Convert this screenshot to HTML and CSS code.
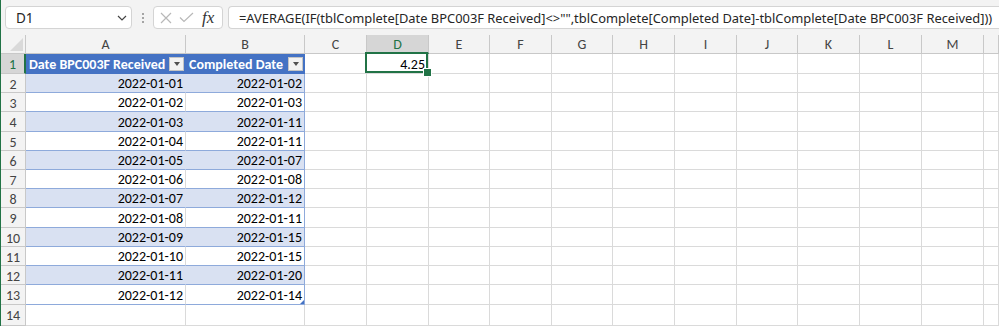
FILE: index.html
```html
<!DOCTYPE html>
<html lang="en">
<head>
    <meta charset="UTF-8">
    <title>tblComplete - Excel</title>
    <link rel="stylesheet" href="styles.css">
</head>
<body>
    <div class="window">
        <div class="formula-bar">
            <div class="name-box">
                <span>D1</span>
                <svg class="chevron" width="10" height="6" viewBox="0 0 10 6"><polyline points="1,1 5,5 9,1" fill="none" stroke="#444" stroke-width="1.2"/></svg>
            </div>
            <div class="grip"><i></i><i></i><i></i></div>
            <div class="fx-box">
                <svg width="12" height="12" viewBox="0 0 12 12"><path d="M1 1 L11 11 M11 1 L1 11" stroke="#b8b8b8" stroke-width="1.2"/></svg>
                <svg width="15" height="11" viewBox="0 0 15 11"><polyline points="1,5.5 5,9.5 14,1" fill="none" stroke="#b8b8b8" stroke-width="1.2"/></svg>
                <span class="fx">fx</span>
            </div>
            <div class="formula">=AVERAGE(IF(tblComplete[Date BPC003F Received]&lt;&gt;"",tblComplete[Completed Date]-tblComplete[Date BPC003F Received]))</div>
        </div>

        <div class="sheet">
            <div class="corner"><svg width="13" height="13" viewBox="0 0 13 13"><polygon points="13,0 13,13 0,13" fill="#d9d9d9"/></svg></div>
            <div class="ch">A</div><div class="ch">B</div><div class="ch">C</div><div class="ch sel">D</div><div class="ch">E</div><div class="ch">F</div><div class="ch">G</div><div class="ch">H</div><div class="ch">I</div><div class="ch">J</div><div class="ch">K</div><div class="ch">L</div><div class="ch">M</div><div class="ch"></div>

            <div class="rh sel">1</div>
            <div class="th a">Date BPC003F Received<span class="filter"></span></div>
            <div class="th b">Completed Date<span class="filter"></span></div>
            <div class="c"></div><div class="c active">4.25</div><div class="c"></div><div class="c"></div><div class="c"></div><div class="c"></div><div class="c"></div><div class="c"></div><div class="c"></div><div class="c"></div><div class="c"></div><div class="c"></div>

            <div class="rh">2</div><div class="td a band">2022-01-01</div><div class="td b band">2022-01-02</div>
            <div class="c"></div><div class="c"></div><div class="c"></div><div class="c"></div><div class="c"></div><div class="c"></div><div class="c"></div><div class="c"></div><div class="c"></div><div class="c"></div><div class="c"></div><div class="c"></div>

            <div class="rh">3</div><div class="td a">2022-01-02</div><div class="td b">2022-01-03</div>
            <div class="c"></div><div class="c"></div><div class="c"></div><div class="c"></div><div class="c"></div><div class="c"></div><div class="c"></div><div class="c"></div><div class="c"></div><div class="c"></div><div class="c"></div><div class="c"></div>

            <div class="rh">4</div><div class="td a band">2022-01-03</div><div class="td b band">2022-01-11</div>
            <div class="c"></div><div class="c"></div><div class="c"></div><div class="c"></div><div class="c"></div><div class="c"></div><div class="c"></div><div class="c"></div><div class="c"></div><div class="c"></div><div class="c"></div><div class="c"></div>

            <div class="rh">5</div><div class="td a">2022-01-04</div><div class="td b">2022-01-11</div>
            <div class="c"></div><div class="c"></div><div class="c"></div><div class="c"></div><div class="c"></div><div class="c"></div><div class="c"></div><div class="c"></div><div class="c"></div><div class="c"></div><div class="c"></div><div class="c"></div>

            <div class="rh">6</div><div class="td a band">2022-01-05</div><div class="td b band">2022-01-07</div>
            <div class="c"></div><div class="c"></div><div class="c"></div><div class="c"></div><div class="c"></div><div class="c"></div><div class="c"></div><div class="c"></div><div class="c"></div><div class="c"></div><div class="c"></div><div class="c"></div>

            <div class="rh">7</div><div class="td a">2022-01-06</div><div class="td b">2022-01-08</div>
            <div class="c"></div><div class="c"></div><div class="c"></div><div class="c"></div><div class="c"></div><div class="c"></div><div class="c"></div><div class="c"></div><div class="c"></div><div class="c"></div><div class="c"></div><div class="c"></div>

            <div class="rh">8</div><div class="td a band">2022-01-07</div><div class="td b band">2022-01-12</div>
            <div class="c"></div><div class="c"></div><div class="c"></div><div class="c"></div><div class="c"></div><div class="c"></div><div class="c"></div><div class="c"></div><div class="c"></div><div class="c"></div><div class="c"></div><div class="c"></div>

            <div class="rh">9</div><div class="td a">2022-01-08</div><div class="td b">2022-01-11</div>
            <div class="c"></div><div class="c"></div><div class="c"></div><div class="c"></div><div class="c"></div><div class="c"></div><div class="c"></div><div class="c"></div><div class="c"></div><div class="c"></div><div class="c"></div><div class="c"></div>

            <div class="rh">10</div><div class="td a band">2022-01-09</div><div class="td b band">2022-01-15</div>
            <div class="c"></div><div class="c"></div><div class="c"></div><div class="c"></div><div class="c"></div><div class="c"></div><div class="c"></div><div class="c"></div><div class="c"></div><div class="c"></div><div class="c"></div><div class="c"></div>

            <div class="rh">11</div><div class="td a">2022-01-10</div><div class="td b">2022-01-15</div>
            <div class="c"></div><div class="c"></div><div class="c"></div><div class="c"></div><div class="c"></div><div class="c"></div><div class="c"></div><div class="c"></div><div class="c"></div><div class="c"></div><div class="c"></div><div class="c"></div>

            <div class="rh">12</div><div class="td a band">2022-01-11</div><div class="td b band">2022-01-20</div>
            <div class="c"></div><div class="c"></div><div class="c"></div><div class="c"></div><div class="c"></div><div class="c"></div><div class="c"></div><div class="c"></div><div class="c"></div><div class="c"></div><div class="c"></div><div class="c"></div>

            <div class="rh">13</div><div class="td a">2022-01-12</div><div class="td b last">2022-01-14</div>
            <div class="c"></div><div class="c"></div><div class="c"></div><div class="c"></div><div class="c"></div><div class="c"></div><div class="c"></div><div class="c"></div><div class="c"></div><div class="c"></div><div class="c"></div><div class="c"></div>

            <div class="rh">14</div><div class="c"></div><div class="c"></div>
            <div class="c"></div><div class="c"></div><div class="c"></div><div class="c"></div><div class="c"></div><div class="c"></div><div class="c"></div><div class="c"></div><div class="c"></div><div class="c"></div><div class="c"></div><div class="c"></div>
        </div>
    </div>
</body>
</html>
```

FILE: styles.css
```css
* {
    box-sizing: border-box;
    margin: 0;
    padding: 0;
}

body {
    background: #ffffff;
    font-family: "Carlito", Roboto, sans-serif;
    font-size: 14px;
    color: #000;
    overflow: hidden;
}

.window {
    height: 326px;
    border-left: 1px solid #217346;
    display: flex;
    flex-direction: column;
}

/* formula bar */
.formula-bar {
    height: 37px;
    background: #f3f3f3;
    display: flex;
    align-items: flex-start;
    padding: 6px 0 0 4px;
    font-family: "Noto Sans", "Open Sans", sans-serif;
    font-size: 12.9px;
    color: #262626;
}

.name-box,
.fx-box,
.formula {
    height: 23px;
    background: #fff;
    border: 1px solid #d4d4d4;
    border-radius: 4px;
    display: flex;
    align-items: center;
}

.name-box {
    width: 127px;
    padding: 0 4px 0 10px;
    justify-content: space-between;
    font-size: 13.5px;
}

.grip {
    width: 21px;
    height: 23px;
    display: flex;
    flex-direction: column;
    align-items: center;
    justify-content: center;
    gap: 2px;
}

.grip i {
    width: 2px;
    height: 2px;
    background: #8a8a8a;
    border-radius: 1px;
}

.fx-box {
    width: 70px;
    padding: 0 4px 0 6px;
    gap: 7px;
}

.fx {
    font-family: "Liberation Serif", serif;
    font-style: italic;
    font-size: 17px;
    color: #333;
    margin-left: 1px;
}

.formula {
    flex: 1;
    margin-left: 5px;
    padding-left: 10px;
    border-right: none;
    border-radius: 4px 0 0 4px;
    white-space: nowrap;
    overflow: hidden;
}

/* grid */
.sheet {
    flex: 1;
    display: grid;
    grid-template-columns: 25px 160px 119px 62px 62px 61px 62px 61px 62px 62px 61px 62px 62px 62px 1fr;
    grid-template-rows: 19px 20px 19px 19px 20px 19px 19px 19px 19px 20px 19px 19px 19px 20px 1fr;
}

.sheet > div {
    border-right: 1px solid #dadada;
    border-bottom: 1px solid #dadada;
    white-space: nowrap;
}

.corner {
    background: #f3f3f3;
    display: flex;
    align-items: flex-end;
    justify-content: flex-end;
    padding: 0 2px 2px 0;
}

.sheet > .corner,
.sheet > .ch,
.sheet > .rh {
    border-color: #c8c8c8;
}

.ch {
    background: #f3f3f3;
    color: #444;
    text-align: center;
    line-height: 18px;
    padding-top: 1px;
}

.rh {
    background: #f3f3f3;
    color: #444;
    text-align: center;
    line-height: 19px;
    padding-top: 1px;
}

.sheet > .ch.sel {
    background: #d6d6d6;
    color: #217346;
    border-bottom: 2px solid #217346;
}

.sheet > .rh.sel {
    background: #d6d6d6;
    color: #217346;
    border-right: 2px solid #217346;
}

/* table */
.th {
    background: #4472c4;
    color: #fff;
    font-weight: bold;
    display: flex;
    align-items: flex-end;
    justify-content: space-between;
    padding: 0 1px 0 3px;
    line-height: 17px;
}

.sheet > .th {
    border-color: #4472c4;
}

.filter {
    width: 15px;
    height: 14px;
    margin-bottom: 2px;
    background: #f2f2f2;
    border: 1px solid #c4c4c4;
    display: flex;
    align-items: center;
    justify-content: center;
}

.filter::after {
    content: "";
    border-left: 3.5px solid transparent;
    border-right: 3.5px solid transparent;
    border-top: 4px solid #505050;
}

.td,
.c {
    display: flex;
    align-items: flex-end;
    justify-content: flex-end;
    padding: 0 2px 0 0;
    line-height: 17px;
}

.sheet > .td {
    border-bottom-color: #8eaadb;
}

.sheet > .td.b {
    border-right-color: #8eaadb;
}

.sheet > .td.band {
    background: #d9e1f2;
}

.sheet > .td.a.band {
    border-right-color: #d9e1f2;
}

.last {
    position: relative;
}

.last::after {
    content: "";
    position: absolute;
    right: 0;
    bottom: 0;
    border-left: 4px solid transparent;
    border-bottom: 4px solid #4472c4;
}

.active {
    position: relative;
    padding-right: 3px;
}

.active::after {
    content: "";
    position: absolute;
    top: -2px;
    left: -2px;
    right: 0;
    bottom: 0;
    border: 2px solid #217346;
    z-index: 2;
}

.active::before {
    content: "";
    position: absolute;
    right: -4px;
    bottom: -4px;
    width: 7px;
    height: 7px;
    background: #217346;
    border: 1px solid #fff;
    z-index: 3;
}
```
